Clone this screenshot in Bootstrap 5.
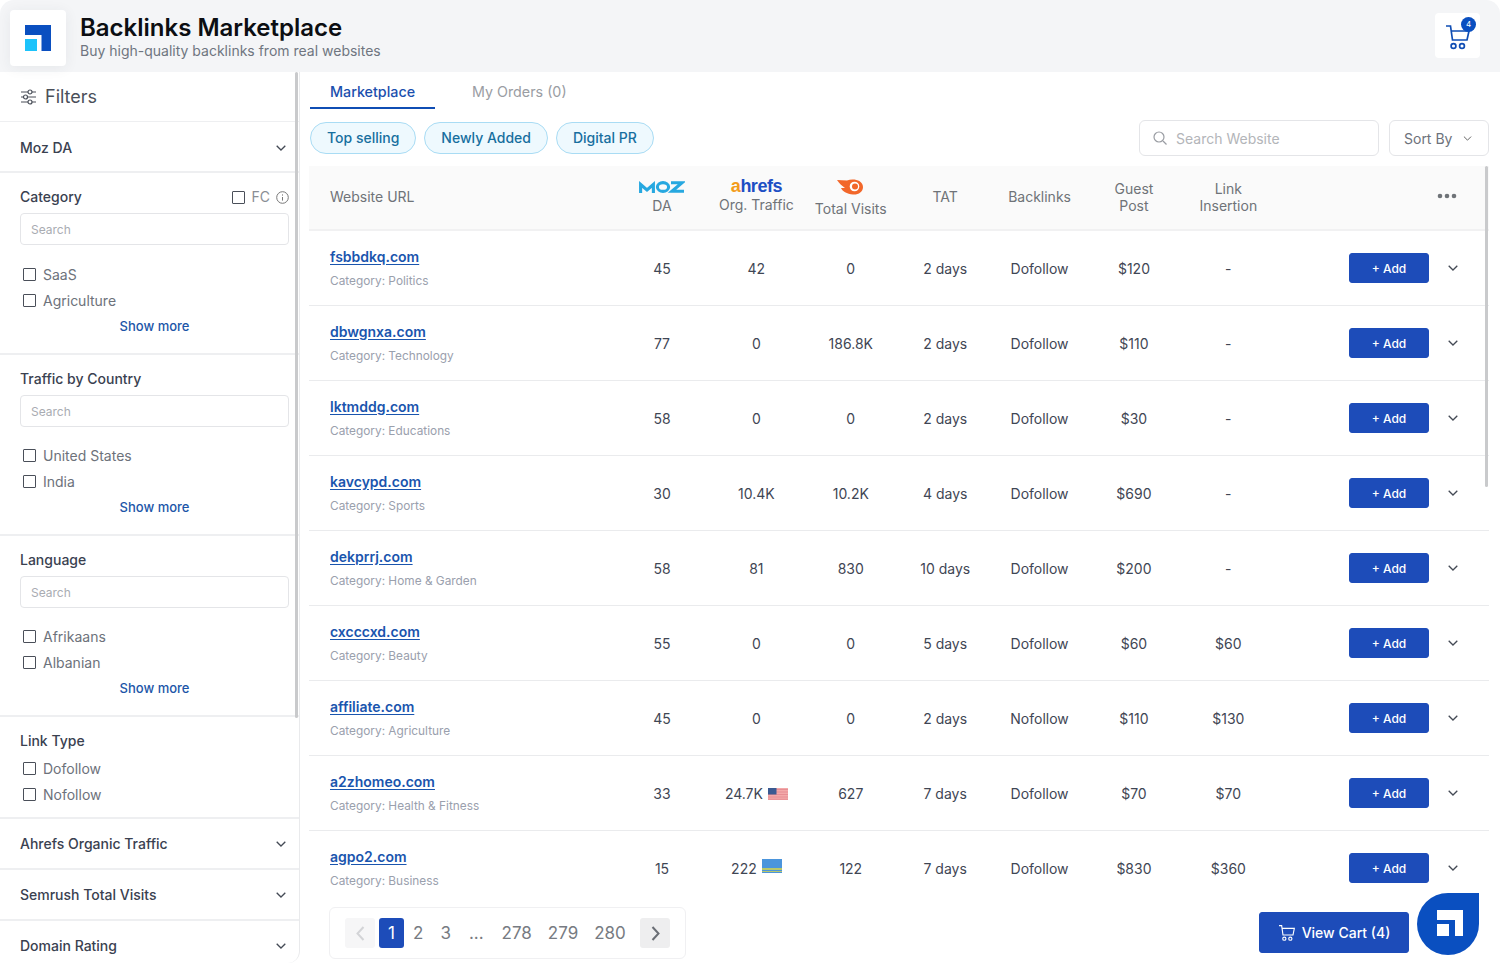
<!DOCTYPE html>
<html lang="en">
<head>
<meta charset="utf-8">
<title>Backlinks Marketplace</title>
<link href="https://cdn.jsdelivr.net/npm/bootstrap@5.3.0/dist/css/bootstrap.min.css" rel="stylesheet">
<style>
html,body{height:100%;}
body{font-family:Inter,"Liberation Sans",sans-serif;font-size:14px;color:#3f4654;background:#fff;overflow:hidden;}
.app-shell{width:1500px;height:974px;display:flex;flex-direction:column;}
.top-head{height:72px;background:#f4f5f7;border-radius:14px 14px 0 0;padding:10px 20px 6px 10px;flex:none;}
.logo-tile{width:56px;height:56px;background:#fff;border-radius:4px;box-shadow:0 2px 14px rgba(40,50,70,.07);}
.head-gap{gap:14px;}
.head-text{padding-top:4px;}
.head-title{font-size:24px;font-weight:600;line-height:28px;color:#0c0e12;margin:0;}
.head-sub{font-size:14px;line-height:17px;color:#6f7580;}
.cart-tile{width:45px;height:45px;background:#fff;border-radius:4px;margin-top:3px;position:relative;}
.cart-count{position:absolute;top:4px;right:4px;width:15px;height:15px;border-radius:50%;background:#0a4fc0;color:#fff;font-size:8px;line-height:15px;text-align:center;}
.body-row{flex:1;min-height:0;}
.side-panel{width:300px;flex:none;height:891px;border-right:1px solid #e9eaec;border-radius:0 0 12px 0;position:relative;overflow:hidden;}
.side-thumb{position:absolute;top:0;right:1px;width:3px;height:646px;background:#c9cacc;border-radius:2px;}
.side-sec{border-bottom:2px solid #eeeff1;padding:0 13px 0 20px;}
.side-sec.last-sec{border-bottom:0;height:49px;}
.filters-head{height:50px;font-size:18px;color:#4a4f59;font-weight:400;border-bottom-width:1px;}
.fold-row{height:51px;font-weight:500;color:#3a4150;}
.fold-row.first-fold{padding-top:2px;}
.list-sec{height:181px;padding-top:14px;padding-right:10px;}
.list-sec.tall-sec{height:182px;}
.sec-label{font-weight:500;color:#3a4150;line-height:20px;}
.fc-mark{color:#8a8e95;line-height:20px;}
.fc-info{margin-left:6px;}
.filter-search.form-control{height:32px;font-size:12px;border:1px solid #e4e5e8;border-radius:4px;padding:0 10px;margin-top:6px;color:#999;box-shadow:none;}
.filter-search::placeholder{color:#a9acb2;}
.tick-list{margin-top:15px;}
.tall-sec .tick-list{margin-top:16px;}
.tick-row{height:26px;color:#6d727b;}
.tick-box{width:13px;height:13px;border:1.6px solid #4a4f59;border-radius:1px;flex:none;display:inline-block;margin-left:3px;margin-right:7px;}
.more-link{font-size:13px;font-weight:500;color:#1c56a8;text-align:center;line-height:16px;margin-top:5px;}
.link-label{margin-bottom:4px;}
.link-sec{height:102px;padding-top:14px;}
.main-panel{flex:1;min-width:0;padding:0 11px 0 10px;position:relative;}
.tab-row{height:37px;}
.tab-item{display:block;height:37px;line-height:40px;text-align:center;font-size:14.3px;color:#9a9da3;text-decoration:none;}
.tab-item.on{width:125px;color:#1b4fae;font-weight:500;border-bottom:2px solid #0f4db4;}
.tab-item.off{margin-left:37px;}
.tool-row{margin-top:11px;height:36px;}
.chip-row{gap:8px;}
.chip-btn.btn{height:32px;padding:0 16px;border-radius:16px;background:#eef9fe;border:1px solid #a9dcf4;color:#176f9f;font-size:14px;font-weight:500;line-height:30px;}
.tool-right{gap:10px;}
.search-box{width:240px;height:36px;border:1px solid #e4e5e8;border-radius:6px;color:#b3b5b9;padding:0 12px;}
.sort-btn.btn{width:100px;height:36px;border:1px solid #e4e5e8;border-radius:6px;color:#6d727b;font-size:14px;padding:0 16px 0 14px;background:#fff;}
.grid-wrap{height:739px;margin:10px 0 0 -1px;overflow:hidden;position:relative;}
.grid-thumb{position:absolute;top:0;right:1px;width:3px;height:321px;background:#c9cacc;border-radius:2px;}
.data-table.table{table-layout:fixed;margin:0;width:1180px;--bs-table-color:#3f4654;}
.url-col{width:305.8px;}
.num-col{width:94.4px;}
.data-table th{height:64px;background:#fafafa;border-bottom:2px solid #f1f1f2;font-weight:400;color:#6f7378;font-size:14px;line-height:17px;text-align:center;vertical-align:middle;padding:0;}
.data-table th.plain-th{padding-bottom:2px;}
.data-table th:first-child{text-align:left;padding-left:21px;}
.data-table td{height:75px;padding:2px 0 0;text-align:center;vertical-align:middle;border-bottom:1px solid #eaebed;font-size:14px;}
.data-table td:first-child{text-align:left;padding:1px 0 0 21px;}
.data-table td:last-child{padding-top:0;}
.moz-logo{display:block;margin:0 auto 4px;}
.data-table th.ahrefs-cell{padding-bottom:4px;}
.ahrefs-mark{display:block;font-weight:700;font-size:18px;line-height:16px;letter-spacing:-.5px;color:#1d4fc4;font-family:"Liberation Sans",sans-serif;margin-bottom:2px;}
.ahrefs-a{color:#f39c1a;}
.sem-logo{display:block;margin:0 auto 5px;}
.more-cell{padding-right:32px;margin-bottom:2px;}
.site-link{font-weight:600;color:#1a55ae;font-size:14px;line-height:18px;text-decoration:underline;text-underline-offset:2px;display:block;}
.cat-text{font-size:11.85px;color:#9aa0ad;line-height:15px;margin-top:8px;}
.add-btn.btn{width:80px;height:30px;padding:0;background:#1d4cb9;border:1px solid #1d4cb9;color:#fff;font-size:12px;border-radius:3px;font-weight:500;line-height:29px;}
.act-cell{display:flex;align-items:center;justify-content:flex-end;gap:19px;padding-right:31px;}
.flag-ic{display:inline-block;vertical-align:-1px;margin-left:1px;}
.flag-up{vertical-align:1px;}
.foot-row{padding:2px 80px 0 19px;}
.pager-card{width:357px;height:52px;border:1px solid #f0f0f2;border-radius:6px;padding:0 15px;font-size:17px;color:#777b82;}
.pg-arrow{width:30px;height:30px;border-radius:3px;background:#f6f6f7;}
.pg-arrow.next{background:#eeeeef;}
.pg-now{width:25px;height:30px;background:#1d4cb9;border-radius:3px;color:#fff;text-align:center;line-height:30px;margin-left:4px;}
.pg-num{text-align:center;line-height:30px;margin-left:16px;}
.pg-two{margin-left:9px;}
.pg-three{margin-left:17px;}
.pg-dots{margin-left:18px;}
.pg-first{margin-left:18px;}
.cart-btn.btn{width:150px;height:41px;background:#1d4cb9;border:1px solid #1d4cb9;color:#fff;font-size:14px;font-weight:500;border-radius:3px;margin-top:5px;padding:0;gap:6px;}
.chat-drop{position:absolute;left:1117px;top:821px;width:62px;height:62px;background:#0a4fc0;border-radius:50% 0 50% 50%;padding:0 0 2px 4px;}
</style>
</head>
<body>
<div class="app-shell">
  <header class="top-head d-flex justify-content-between">
    <div class="d-flex head-gap align-items-start">
      <div class="logo-tile d-flex align-items-center justify-content-center">
        <svg width="26" height="26" viewBox="0 0 26 26"><path d="M0 0H26V26H16.5V10H0Z" fill="#0a4fc0"/><rect x="0" y="14" width="12" height="12" fill="#1cc3fb"/></svg>
      </div>
      <div class="head-text">
        <h1 class="head-title">Backlinks Marketplace</h1>
        <div class="head-sub">Buy high-quality backlinks from real websites</div>
      </div>
    </div>
    <div class="cart-tile d-flex align-items-center justify-content-center">
      <svg width="26" height="28" viewBox="0 0 26 28" fill="none" stroke="#0f4db4" stroke-width="1.7"><path d="M1 4H5.5L7.5 18H22L24 9H6"/><circle cx="8.5" cy="24" r="2.4"/><circle cx="17" cy="24" r="2.4"/></svg>
      <span class="cart-count">4</span>
    </div>
  </header>
  <div class="body-row d-flex">
    <aside class="side-panel">
      <div class="side-sec filters-head d-flex align-items-center gap-2">
        <svg width="17" height="16" viewBox="0 0 17 16" fill="none" stroke="#4a4f59" stroke-width="1.2"><path d="M1 3H8M12 3H16M1 8H3.5M7.5 8H16M1 13H8M12 13H16"/><circle cx="10" cy="3" r="2"/><circle cx="5.5" cy="8" r="2"/><circle cx="10" cy="13" r="2"/></svg>
        <span>Filters</span>
      </div>
      <div class="side-sec fold-row first-fold d-flex align-items-center justify-content-between"><span>Moz DA</span><svg width="10" height="6" viewBox="0 0 10 6" fill="none" stroke="#444a55" stroke-width="1.3"><path d="M.7.7 5 5 9.3.7"/></svg></div>
      <div class="side-sec list-sec tall-sec">
        <div class="d-flex justify-content-between align-items-center">
          <span class="sec-label">Category</span>
          <span class="fc-mark d-flex align-items-center"><span class="tick-box"></span>FC<svg class="fc-info" width="13" height="13" viewBox="0 0 13 13" fill="none" stroke="#777" stroke-width="1"><circle cx="6.5" cy="6.5" r="5.8"/><path d="M6.5 6V9.6M6.5 3.4V4.6"/></svg></span>
        </div>
        <input class="form-control filter-search" placeholder="Search">
        <div class="tick-list">
          <div class="tick-row d-flex align-items-center"><span class="tick-box"></span>SaaS</div>
          <div class="tick-row d-flex align-items-center"><span class="tick-box"></span>Agriculture</div>
        </div>
        <div class="more-link">Show more</div>
      </div>
      <div class="side-sec list-sec">
        <div class="sec-label">Traffic by Country</div>
        <input class="form-control filter-search" placeholder="Search">
        <div class="tick-list">
          <div class="tick-row d-flex align-items-center"><span class="tick-box"></span>United States</div>
          <div class="tick-row d-flex align-items-center"><span class="tick-box"></span>India</div>
        </div>
        <div class="more-link">Show more</div>
      </div>
      <div class="side-sec list-sec">
        <div class="sec-label">Language</div>
        <input class="form-control filter-search" placeholder="Search">
        <div class="tick-list">
          <div class="tick-row d-flex align-items-center"><span class="tick-box"></span>Afrikaans</div>
          <div class="tick-row d-flex align-items-center"><span class="tick-box"></span>Albanian</div>
        </div>
        <div class="more-link">Show more</div>
      </div>
      <div class="side-sec link-sec">
        <div class="sec-label link-label">Link Type</div>
        <div class="tick-row d-flex align-items-center"><span class="tick-box"></span>Dofollow</div>
        <div class="tick-row d-flex align-items-center"><span class="tick-box"></span>Nofollow</div>
      </div>
      <div class="side-sec fold-row d-flex align-items-center justify-content-between"><span>Ahrefs Organic Traffic</span><svg width="10" height="6" viewBox="0 0 10 6" fill="none" stroke="#444a55" stroke-width="1.3"><path d="M.7.7 5 5 9.3.7"/></svg></div>
      <div class="side-sec fold-row d-flex align-items-center justify-content-between"><span>Semrush Total Visits</span><svg width="10" height="6" viewBox="0 0 10 6" fill="none" stroke="#444a55" stroke-width="1.3"><path d="M.7.7 5 5 9.3.7"/></svg></div>
      <div class="side-sec fold-row last-sec d-flex align-items-center justify-content-between"><span>Domain Rating</span><svg width="10" height="6" viewBox="0 0 10 6" fill="none" stroke="#444a55" stroke-width="1.3"><path d="M.7.7 5 5 9.3.7"/></svg></div>
      <div class="side-thumb"></div>
    </aside>
    <main class="main-panel">
      <div class="tab-row d-flex">
        <a class="tab-item on" href="#">Marketplace</a>
        <a class="tab-item off" href="#">My Orders (0)</a>
      </div>
      <div class="tool-row d-flex justify-content-between align-items-center">
        <div class="d-flex chip-row">
          <button class="btn chip-btn">Top selling</button>
          <button class="btn chip-btn">Newly Added</button>
          <button class="btn chip-btn">Digital PR</button>
        </div>
        <div class="d-flex tool-right">
          <div class="search-box d-flex align-items-center gap-2">
            <svg width="16" height="16" viewBox="0 0 16 16" fill="none" stroke="#9a9da3" stroke-width="1.2"><circle cx="7" cy="7" r="5"/><path d="M11 11 14.5 14.5"/></svg>
            <span>Search Website</span>
          </div>
          <button class="btn sort-btn d-flex align-items-center justify-content-between">Sort By<svg width="9" height="5" viewBox="0 0 10 6" fill="none" stroke="#666" stroke-width="1.2"><path d="M.7.7 5 5 9.3.7"/></svg></button>
        </div>
      </div>
      <div class="grid-wrap">
        <table class="table data-table">
          <colgroup><col class="url-col"><col class="num-col"><col class="num-col"><col class="num-col"><col class="num-col"><col class="num-col"><col class="num-col"><col class="num-col"><col></colgroup>
          <thead>
            <tr>
              <th class="plain-th">Website URL</th>
              <th><svg class="moz-logo" width="46" height="12" viewBox="0 0 46 12" fill="none" stroke="#27a8e0" stroke-width="3.1"><path d="M1.6 12V3.5L8 9 14.4 3.5V12"/><ellipse cx="24" cy="6" rx="5.6" ry="4.4"/><path d="M32 1.8H43L33 10.2H45"/></svg><span class="d-block">DA</span></th>
              <th class="ahrefs-cell"><span class="ahrefs-mark"><span class="ahrefs-a">a</span>hrefs</span><span class="d-block">Org. Traffic</span></th>
              <th><svg class="sem-logo" width="27" height="16" viewBox="0 0 27 16"><path d="M0 1 10 1.500C16-1 26 1 26 8 26 13 21 16 16 15.500 10 15 5 12 4 9L8 9C5 7 2 4 0 1Z" fill="#f2672a"/><circle cx="17.500" cy="7.500" r="4.800" fill="#fff"/><circle cx="18" cy="7.500" r="3" fill="#f2672a"/></svg><span class="d-block">Total Visits</span></th>
              <th class="plain-th">TAT</th>
              <th class="plain-th">Backlinks</th>
              <th class="plain-th">Guest<br>Post</th>
              <th class="plain-th">Link<br>Insertion</th>
              <th class="plain-th"><div class="d-flex justify-content-end more-cell"><svg width="20" height="6" viewBox="0 0 20 6" fill="#6f7378"><circle cx="3" cy="3" r="2.3"/><circle cx="10" cy="3" r="2.3"/><circle cx="17" cy="3" r="2.3"/></svg></div></th>
            </tr>
          </thead>
          <tbody>
            <tr><td><a class="site-link" href="#">fsbbdkq.com</a><div class="cat-text">Category: Politics</div></td><td>45</td><td>42</td><td>0</td><td>2 days</td><td>Dofollow</td><td>$120</td><td>-</td><td><div class="act-cell"><button class="btn add-btn">+ Add</button><svg width="10" height="6" viewBox="0 0 10 6" fill="none" stroke="#444a55" stroke-width="1.3"><path d="M.7.7 5 5 9.3.7"/></svg></div></td></tr>
            <tr><td><a class="site-link" href="#">dbwgnxa.com</a><div class="cat-text">Category: Technology</div></td><td>77</td><td>0</td><td>186.8K</td><td>2 days</td><td>Dofollow</td><td>$110</td><td>-</td><td><div class="act-cell"><button class="btn add-btn">+ Add</button><svg width="10" height="6" viewBox="0 0 10 6" fill="none" stroke="#444a55" stroke-width="1.3"><path d="M.7.7 5 5 9.3.7"/></svg></div></td></tr>
            <tr><td><a class="site-link" href="#">lktmddg.com</a><div class="cat-text">Category: Educations</div></td><td>58</td><td>0</td><td>0</td><td>2 days</td><td>Dofollow</td><td>$30</td><td>-</td><td><div class="act-cell"><button class="btn add-btn">+ Add</button><svg width="10" height="6" viewBox="0 0 10 6" fill="none" stroke="#444a55" stroke-width="1.3"><path d="M.7.7 5 5 9.3.7"/></svg></div></td></tr>
            <tr><td><a class="site-link" href="#">kavcypd.com</a><div class="cat-text">Category: Sports</div></td><td>30</td><td>10.4K</td><td>10.2K</td><td>4 days</td><td>Dofollow</td><td>$690</td><td>-</td><td><div class="act-cell"><button class="btn add-btn">+ Add</button><svg width="10" height="6" viewBox="0 0 10 6" fill="none" stroke="#444a55" stroke-width="1.3"><path d="M.7.7 5 5 9.3.7"/></svg></div></td></tr>
            <tr><td><a class="site-link" href="#">dekprrj.com</a><div class="cat-text">Category: Home &amp; Garden</div></td><td>58</td><td>81</td><td>830</td><td>10 days</td><td>Dofollow</td><td>$200</td><td>-</td><td><div class="act-cell"><button class="btn add-btn">+ Add</button><svg width="10" height="6" viewBox="0 0 10 6" fill="none" stroke="#444a55" stroke-width="1.3"><path d="M.7.7 5 5 9.3.7"/></svg></div></td></tr>
            <tr><td><a class="site-link" href="#">cxcccxd.com</a><div class="cat-text">Category: Beauty</div></td><td>55</td><td>0</td><td>0</td><td>5 days</td><td>Dofollow</td><td>$60</td><td>$60</td><td><div class="act-cell"><button class="btn add-btn">+ Add</button><svg width="10" height="6" viewBox="0 0 10 6" fill="none" stroke="#444a55" stroke-width="1.3"><path d="M.7.7 5 5 9.3.7"/></svg></div></td></tr>
            <tr><td><a class="site-link" href="#">affiliate.com</a><div class="cat-text">Category: Agriculture</div></td><td>45</td><td>0</td><td>0</td><td>2 days</td><td>Nofollow</td><td>$110</td><td>$130</td><td><div class="act-cell"><button class="btn add-btn">+ Add</button><svg width="10" height="6" viewBox="0 0 10 6" fill="none" stroke="#444a55" stroke-width="1.3"><path d="M.7.7 5 5 9.3.7"/></svg></div></td></tr>
            <tr><td><a class="site-link" href="#">a2zhomeo.com</a><div class="cat-text">Category: Health &amp; Fitness</div></td><td>33</td><td>24.7K <svg class="flag-ic" width="20" height="12" viewBox="0 0 20 12"><rect width="20" height="12" fill="#f3a9a9"/><path d="M0 1.5H20M0 4H20M0 6.5H20M0 9H20M0 11.3H20" stroke="#e58b92" stroke-width=".9"/><rect width="8.5" height="6.5" fill="#3b5a92"/></svg></td><td>627</td><td>7 days</td><td>Dofollow</td><td>$70</td><td>$70</td><td><div class="act-cell"><button class="btn add-btn">+ Add</button><svg width="10" height="6" viewBox="0 0 10 6" fill="none" stroke="#444a55" stroke-width="1.3"><path d="M.7.7 5 5 9.3.7"/></svg></div></td></tr>
            <tr><td><a class="site-link" href="#">agpo2.com</a><div class="cat-text">Category: Business</div></td><td>15</td><td>222 <svg class="flag-ic flag-up" width="20" height="14" viewBox="0 0 20 14"><rect width="20" height="14" fill="#4b95dc"/><rect y="9" width="20" height="2" fill="#b9c76a"/><rect y="12" width="20" height="1" fill="#b9c76a"/></svg></td><td>122</td><td>7 days</td><td>Dofollow</td><td>$830</td><td>$360</td><td><div class="act-cell"><button class="btn add-btn">+ Add</button><svg width="10" height="6" viewBox="0 0 10 6" fill="none" stroke="#444a55" stroke-width="1.3"><path d="M.7.7 5 5 9.3.7"/></svg></div></td></tr>
          </tbody>
        </table>
        <div class="grid-thumb"></div>
      </div>
      <div class="foot-row d-flex justify-content-between">
        <div class="pager-card d-flex align-items-center">
          <span class="pg-arrow d-flex align-items-center justify-content-center"><svg width="9" height="15" viewBox="0 0 9 15" fill="none" stroke="#d3d4d7" stroke-width="2"><path d="M7.5 1 1.5 7.5 7.5 14"/></svg></span>
          <span class="pg-now">1</span>
          <span class="pg-num pg-two">2</span>
          <span class="pg-num pg-three">3</span>
          <span class="pg-num pg-dots">...</span>
          <span class="pg-num pg-first">278</span>
          <span class="pg-num">279</span>
          <span class="pg-num">280</span>
          <span class="pg-arrow next d-flex align-items-center justify-content-center ms-auto"><svg width="9" height="15" viewBox="0 0 9 15" fill="none" stroke="#6a6e75" stroke-width="2"><path d="M1.5 1 7.5 7.5 1.5 14"/></svg></span>
        </div>
        <button class="btn cart-btn d-flex align-items-center justify-content-center">
          <svg width="18" height="16" viewBox="0 0 26 24" fill="none" stroke="#fff" stroke-width="1.7"><path d="M1 1H5L7 15H22L24 5H5.5"/><circle cx="9" cy="20.5" r="2.4"/><circle cx="18" cy="20.5" r="2.4"/></svg>
          View Cart (4)
        </button>
      </div>
      <div class="chat-drop d-flex align-items-center justify-content-center">
        <svg width="26" height="26" viewBox="0 0 26 26"><path d="M0 0H26V26H18V10H0Z" fill="#fff"/><rect y="14" width="12" height="12" fill="#fff"/></svg>
      </div>
    </main>
  </div>
</div>
<script src="https://cdn.jsdelivr.net/npm/bootstrap@5.3.0/dist/js/bootstrap.bundle.min.js"></script>
</body>
</html>
